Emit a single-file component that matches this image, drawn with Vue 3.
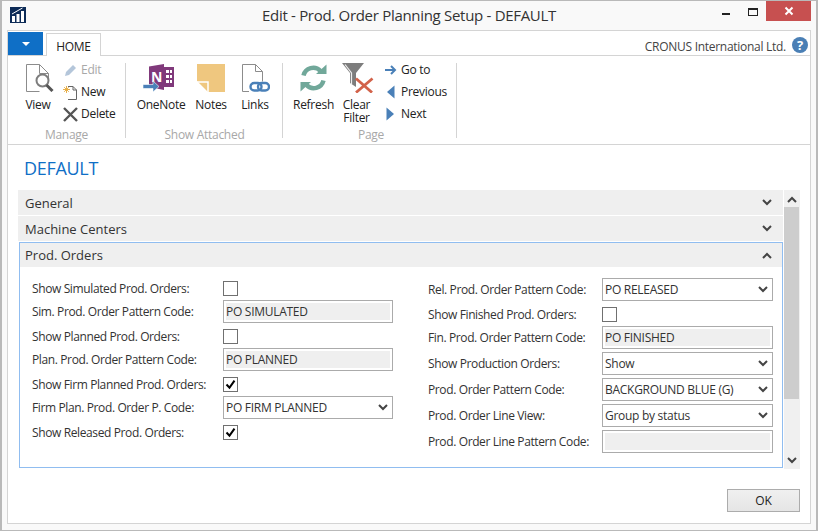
<template>
  <div class="window">
    <header class="titlebar">
      <svg class="logo" width="16" height="16" viewBox="0 0 16 16">
        <rect width="16" height="16" fill="#0d2b57" />
        <path d="M2 15V9h3v6zM6.500 15V7h3v8zM11 15V4h3v11z" fill="#fff" />
        <path d="M2 7l6-3.500L12.500 1" fill="none" stroke="#fff" stroke-width="1" />
      </svg>
      <div class="title">Edit - Prod. Order Planning Setup - DEFAULT</div>
      <div class="controls">
        <span class="ctl-min"></span>
        <span class="ctl-max"></span>
        <span class="ctl-close">
          <svg width="10" height="10" viewBox="0 0 10 10">
            <path d="M1.500 1.500l7 7M8.500 1.500l-7 7" stroke="#fff" stroke-width="2" />
          </svg>
        </span>
      </div>
    </header>

    <div class="frame">
      <div class="tabs">
        <div class="app-btn"><span class="caret"></span></div>
        <div class="tab">HOME</div>
        <div class="company">CRONUS International Ltd.</div>
        <div class="help">?</div>
      </div>

      <div class="ribbon">
        <section class="group manage">
          <div class="buttons">
            <div class="big view">
              <svg width="28" height="28" viewBox="0 0 28 28">
                <path d="M.5 27.500V.5h13l9 9v6M13.500.5v9h9M.5 27.500h13" fill="none" stroke="#8c8c8c" />
                <circle cx="16.500" cy="16.500" r="6" fill="#fff" stroke="#7d7d7d" stroke-width="2" />
                <path d="M20.500 21l6 6" stroke="#555" stroke-width="3" />
              </svg>
              <span>View</span>
            </div>
            <div class="smalls">
              <div class="small off">
                <svg width="15" height="14" viewBox="0 0 15 14">
                  <path d="M2 13l1-4 7-7 3 3-7 7z" fill="#b4c6da" />
                </svg>
                <span>Edit</span>
              </div>
              <div class="small">
                <svg width="15" height="15" viewBox="0 0 15 15">
                  <path d="M5 1.500h5l3.500 3.500v9.500h-8.500" fill="none" stroke="#666" />
                  <path d="M10 1.500V5h3.500" fill="none" stroke="#666" />
                  <path d="M3.500 1v7M0 4.500h7M1.200 2.200l4.600 4.600M5.800 2.200L1.200 6.800" stroke="#e8b04a" stroke-width="1" />
                </svg>
                <span>New</span>
              </div>
              <div class="small">
                <svg width="15" height="15" viewBox="0 0 15 15">
                  <path d="M1 1l13 13M14 1L1 14" stroke="#555" stroke-width="2.400" />
                </svg>
                <span>Delete</span>
              </div>
            </div>
          </div>
          <div class="caption">Manage</div>
        </section>
        <div class="sep"></div>

        <section class="group attached">
          <div class="buttons">
            <div class="big onenote">
              <svg width="32" height="29" viewBox="0 0 32 29">
                <path d="M6 2.500L21 0v26l-15-3z" fill="#80397b" />
                <path d="M21 3h10v20H21z" fill="#80397b" />
                <path d="M23 6h3v3h-3zM27 6h2v3h-2zM23 11h3v3h-3zM27 11h2v3h-2zM23 16h3v3h-3zM27 16h2v3h-2z" fill="#fff" />
                <text x="8" y="17.500" class="n-mark">N</text>
                <path d="M0 20.500h10v-3.500l6 5.500-6 5.500v-3.500H0z" fill="#4a80b8" stroke="#fff" stroke-width=".6" />
              </svg>
              <span>OneNote</span>
            </div>
            <div class="big notes">
              <svg width="28" height="28" viewBox="0 0 28 28">
                <path d="M0 0h28v28H11L0 17z" fill="#efc77f" />
                <path d="M0 18h11v10" fill="none" stroke="#fff" stroke-width="1.500" />
              </svg>
              <span>Notes</span>
            </div>
            <div class="big links">
              <svg width="28" height="28" viewBox="0 0 28 28">
                <path d="M7 27.500H.5V.5h13l7 7v10M13.500.5v7h7" fill="none" stroke="#8c8c8c" />
                <rect x="8.500" y="19" width="11" height="7.500" rx="3.700" fill="none" stroke="#4a80b8" stroke-width="2.400" />
                <rect x="16" y="19" width="11" height="7.500" rx="3.700" fill="none" stroke="#4a80b8" stroke-width="2.400" />
              </svg>
              <span>Links</span>
            </div>
          </div>
          <div class="caption">Show Attached</div>
        </section>
        <div class="sep"></div>

        <section class="group page">
          <div class="buttons">
            <div class="big refresh">
              <svg width="27" height="27" viewBox="0 0 27 27">
                <path d="M3.500 11A10 10 0 0 1 20.500 6.500" fill="none" stroke="#71a89a" stroke-width="4.500" />
                <path d="M16 9.500h10.500V0z" fill="#71a89a" />
                <path d="M23.500 16A10 10 0 0 1 6.500 20.500" fill="none" stroke="#71a89a" stroke-width="4.500" />
                <path d="M11 17.500H.5V27z" fill="#71a89a" />
              </svg>
              <span>Refresh</span>
            </div>
            <div class="big clear">
              <svg width="32" height="30" viewBox="0 0 32 30">
                <path d="M0 0h22l-8 10v14l-6-4V10z" fill="#7d7d7d" />
                <path d="M3 1.500l6.500 8.500v11" fill="none" stroke="#eee" stroke-width="1.200" />
                <path d="M14 15.500l16 14M30.500 15.500L14 29.500" stroke="#d2624a" stroke-width="2.800" />
              </svg>
              <span>Clear<br />Filter</span>
            </div>
            <div class="smalls">
              <div class="small">
                <svg width="15" height="14" viewBox="0 0 15 14">
                  <path d="M2 7h10M8 3l4 4-4 4" fill="none" stroke="#4a80b8" stroke-width="2" />
                </svg>
                <span>Go to</span>
              </div>
              <div class="small">
                <svg width="15" height="14" viewBox="0 0 15 14">
                  <path d="M11.500 0.500v13L4 7z" fill="#4a80b8" />
                </svg>
                <span>Previous</span>
              </div>
              <div class="small">
                <svg width="15" height="14" viewBox="0 0 15 14">
                  <path d="M3.500 0.500v13L11 7z" fill="#4a80b8" />
                </svg>
                <span>Next</span>
              </div>
            </div>
          </div>
          <div class="caption">Page</div>
        </section>
        <div class="sep"></div>
      </div>

      <main class="content">
        <h1 class="heading">DEFAULT</h1>
        <div class="scroller">
          <div class="fasttabs">
            <div class="fast-head">
              <span>General</span>
              <svg class="chev" width="10" height="7" viewBox="0 0 10 7"><path d="M1 1l4 4 4-4" /></svg>
            </div>
            <div class="fast-head">
              <span>Machine Centers</span>
              <svg class="chev" width="10" height="7" viewBox="0 0 10 7"><path d="M1 1l4 4 4-4" /></svg>
            </div>
            <div class="fast-open">
              <div class="fast-head inner">
                <span>Prod. Orders</span>
                <svg class="chev" width="10" height="7" viewBox="0 0 10 7"><path d="M1 6l4-4 4 4" /></svg>
              </div>
              <div class="form">
                <div v-for="(col, c) in columns" :key="c" class="col" :class="'col-' + c">
                  <div v-for="row in col" :key="row.label" class="row" :class="{ 'row-check': row.type === 'check' }">
                    <label class="label">{{ row.label }}</label>
                    <span v-if="row.type === 'check'" class="check">
                      <svg v-if="row.on" width="11" height="11" viewBox="0 0 11 11">
                        <path d="M1.500 5.500l3 3.200 5-7" fill="none" stroke="#000" stroke-width="2" />
                      </svg>
                    </span>
                    <div v-else-if="row.type === 'text'" class="field readonly"><span>{{ row.value }}</span></div>
                    <div v-else class="field">
                      <span class="value">{{ row.value }}</span>
                      <svg class="drop" width="10" height="7" viewBox="0 0 10 7"><path d="M1 1l4 4 4-4" /></svg>
                    </div>
                  </div>
                </div>
              </div>
            </div>
          </div>
          <div class="scrollbar">
            <svg class="chev up" width="10" height="7" viewBox="0 0 10 7"><path d="M1 6l4-4 4 4" /></svg>
            <div class="thumb"></div>
            <svg class="chev down" width="10" height="7" viewBox="0 0 10 7"><path d="M1 1l4 4 4-4" /></svg>
          </div>
        </div>
        <div class="footer">
          <button class="ok">OK</button>
        </div>
      </main>
    </div>
  </div>
</template>

<script setup>
const columns = [
  [
    { label: 'Show Simulated Prod. Orders:', type: 'check', on: false },
    { label: 'Sim. Prod. Order Pattern Code:', type: 'text', value: 'PO SIMULATED' },
    { label: 'Show Planned Prod. Orders:', type: 'check', on: false },
    { label: 'Plan. Prod. Order Pattern Code:', type: 'text', value: 'PO PLANNED' },
    { label: 'Show Firm Planned Prod. Orders:', type: 'check', on: true },
    { label: 'Firm Plan. Prod. Order P. Code:', type: 'select', value: 'PO FIRM PLANNED' },
    { label: 'Show Released Prod. Orders:', type: 'check', on: true },
  ],
  [
    { label: 'Rel. Prod. Order Pattern Code:', type: 'select', value: 'PO RELEASED' },
    { label: 'Show Finished Prod. Orders:', type: 'check', on: false },
    { label: 'Fin. Prod. Order Pattern Code:', type: 'text', value: 'PO FINISHED' },
    { label: 'Show Production Orders:', type: 'select', value: 'Show' },
    { label: 'Prod. Order Pattern Code:', type: 'select', value: 'BACKGROUND BLUE (G)' },
    { label: 'Prod. Order Line View:', type: 'select', value: 'Group by status' },
    { label: 'Prod. Order Line Pattern Code:', type: 'text', value: '' },
  ],
]
</script>

<style>
html,
body {
  margin: 0;
  background: #fff;
}
</style>

<style scoped>
.window {
  width: 818px;
  height: 531px;
  box-sizing: border-box;
  display: flex;
  flex-direction: column;
  background: #f9f9f9;
  border: 2px solid #b9b9b9;
  border-width: 1px 2px 1px 2px;
  font-family: "Open Sans", "Liberation Sans", sans-serif;
  font-size: 12px;
  letter-spacing: -0.28px;
  color: #333;
}

.titlebar {
  height: 29px;
  flex: none;
  position: relative;
  display: flex;
  justify-content: center;
}

.logo {
  position: absolute;
  left: 8px;
  top: 6px;
}

.title {
  font-size: 15px;
  line-height: 29px;
  letter-spacing: -0.3px;
}

.controls {
  position: absolute;
  top: 0;
  right: 5px;
  display: flex;
  align-items: flex-start;
}

.ctl-min {
  width: 8px;
  height: 2px;
  margin: 12px 18px 0 0;
  background: #222;
}

.ctl-max {
  width: 8px;
  height: 5px;
  margin: 7px 8px 0 0;
  border: 1px solid #222;
  border-top-width: 2px;
}

.ctl-close {
  width: 45px;
  height: 20px;
  background: #c75050;
  display: flex;
  align-items: center;
  justify-content: center;
}

.frame {
  flex: 1;
  margin: 0 5px 6px;
  border: 1px solid #d4d4d4;
  background: #fff;
  display: flex;
  flex-direction: column;
  min-height: 0;
}

.tabs {
  height: 24px;
  flex: none;
  display: flex;
  align-items: flex-end;
  border-bottom: 1px solid #d4d4d4;
  position: relative;
}

.app-btn {
  width: 35px;
  height: 23px;
  background: #0f6fc6;
  display: flex;
  align-items: center;
  justify-content: center;
}

.caret {
  border-left: 4px solid transparent;
  border-right: 4px solid transparent;
  border-top: 4px solid #fff;
}

.tab {
  width: 55px;
  height: 23px;
  margin: 0 0 -1px 3px;
  box-sizing: border-box;
  border: 1px solid #d4d4d4;
  border-bottom: none;
  background: #fff;
  text-align: center;
  line-height: 26px;
  color: #222;
}

.company {
  margin-left: auto;
  align-self: center;
  padding-top: 6px;
  color: #444;
}

.help {
  width: 16px;
  height: 16px;
  margin: 0 2px 2px 6px;
  border-radius: 50%;
  background: #4a7fb5;
  color: #fff;
  font-weight: 700;
  font-size: 13px;
  line-height: 16px;
  text-align: center;
  letter-spacing: 0;
}

.ribbon {
  height: 89px;
  flex: none;
  box-sizing: border-box;
  padding: 7px 0 0;
  display: flex;
  align-items: flex-start;
  border-bottom: 1px solid #d4d4d4;
}

.group {
  display: flex;
  flex-direction: column;
  box-sizing: border-box;
}

.buttons {
  height: 65px;
  display: flex;
  align-items: flex-start;
}

.caption {
  line-height: 14px;
  text-align: center;
  color: #a8a8a8;
}

.sep {
  width: 1px;
  height: 75px;
  background: #d4d4d4;
}

.manage {
  width: 117px;
  padding-left: 7px;
}

.manage .caption {
  margin-left: -7px;
}

.attached {
  width: 156px;
  padding-left: 10px;
}

.attached .caption {
  margin-left: -9px;
}

.page {
  width: 173px;
  padding-left: 10px;
}

.page .caption {
  margin-left: -7px;
}

.big {
  padding-top: 1px;
  display: flex;
  flex-direction: column;
  align-items: center;
  line-height: 13px;
  text-align: center;
  color: #222;
}

.big svg {
  margin-bottom: 6px;
  height: 28px;
}

.view {
  width: 46px;
}

.view svg {
  margin-left: 4px;
}

.onenote {
  width: 50px;
}

.big.onenote svg {
  height: 29px;
  margin: 0 4px 5px 0;
}

.notes {
  width: 50px;
}

.links {
  width: 38px;
}

.links svg {
  margin-left: 2px;
}

.refresh {
  width: 41px;
}

.clear {
  width: 45px;
}

.big.clear svg {
  height: 30px;
  margin: -1px 0 5px 3px;
}

.smalls {
  display: flex;
  flex-direction: column;
  gap: 8px;
  margin-left: 2px;
}

.page .smalls {
  margin-left: 4px;
}

.small {
  height: 14px;
  display: flex;
  align-items: center;
  gap: 3px;
  line-height: 14px;
  color: #222;
  white-space: nowrap;
}

.small.off {
  color: #a8a8a8;
}

.content {
  flex: 1;
  min-height: 0;
  display: flex;
  flex-direction: column;
  padding: 0 9px 0 10px;
}

.heading {
  margin: 12px 0 0 6px;
  height: 33px;
  font-size: 18px;
  font-weight: 400;
  line-height: 22px;
  letter-spacing: -0.3px;
  color: #0f6fc6;
}

.scroller {
  height: 279px;
  flex: none;
  display: flex;
}

.fasttabs {
  width: 765px;
  flex: none;
  display: flex;
  flex-direction: column;
  gap: 1px;
}

.fast-head {
  height: 25px;
  flex: none;
  box-sizing: border-box;
  padding: 0 11px 0 7px;
  background: #efefef;
  display: flex;
  align-items: center;
  justify-content: space-between;
  font-size: 13px;
  letter-spacing: 0;
  color: #333;
}

.fast-open {
  height: 226px;
  box-sizing: border-box;
  margin-left: 1px;
  border: 1px solid #90bdf0;
}

.fast-head.inner {
  height: 24px;
  padding: 0 10px 0 5px;
}

.chev path,
.drop path {
  fill: none;
  stroke: #444;
  stroke-width: 2;
}

.form {
  display: flex;
  padding: 9px 0 0 12px;
}

.col-0 {
  width: 396px;
}

.row {
  height: 26px;
  display: flex;
  align-items: center;
}

.row-check {
  height: 22px;
  box-sizing: border-box;
  padding-top: 2px;
}

.label {
  flex: none;
  color: #333;
  letter-spacing: -0.38px;
}

.col-0 .label {
  width: 191px;
}

.col-1 .label {
  width: 174px;
}

.check {
  width: 13px;
  height: 13px;
  border: 1px solid #707070;
  display: flex;
  align-items: center;
  justify-content: center;
  background: #fff;
}

.field {
  height: 23px;
  box-sizing: border-box;
  border: 1px solid #ababab;
  display: flex;
  align-items: center;
  justify-content: space-between;
  padding: 0 4px 0 2px;
  background: #fff;
  color: #333;
}

.col-0 .field {
  width: 170px;
}

.col-1 .field {
  width: 171px;
}

.value {
  white-space: nowrap;
}

.field.readonly {
  padding: 2px;
}

.field.readonly span {
  display: block;
  width: 100%;
  height: 100%;
  background: #efefef;
  line-height: 17px;
}

.scrollbar {
  width: 16px;
  height: 279px;
  flex: none;
  position: relative;
  background: #f0f0f0;
  margin-left: 1px;
}

.thumb {
  position: absolute;
  top: 17px;
  left: 0;
  width: 15px;
  height: 192px;
  background: #cdcdcd;
}

.scrollbar .chev {
  position: absolute;
  left: 3px;
}

.up {
  top: 6px;
}

.down {
  bottom: 5px;
}

.footer {
  display: flex;
  justify-content: flex-end;
  padding: 20px 1px 0 0;
}

.ok {
  width: 73px;
  height: 23px;
  padding: 0;
  border: 1px solid #acacac;
  background: linear-gradient(#f0f0f0, #e5e5e5);
  font: inherit;
  letter-spacing: 0;
  color: #222;
}

.n-mark {
  font-size: 14px;
  font-weight: 700;
  fill: #fff;
  letter-spacing: 0;
}
</style>
